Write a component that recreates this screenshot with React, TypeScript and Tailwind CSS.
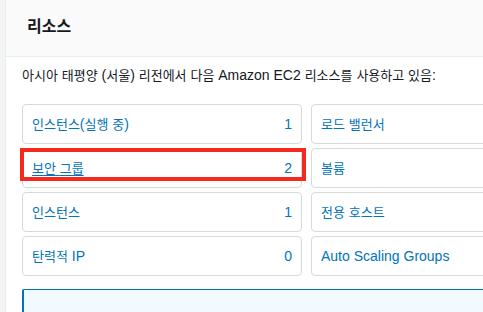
import React from "react";

const font = { fontFamily: '"Liberation Sans", "Noto Sans CJK KR", sans-serif' };

function K({ text, size = "sm" }: { text: string; size?: "sm" | "lg" }) {
  const parts = text.split(/([\uAC00-\uD7A3]+)/);
  return (
    <span>
      {parts.map((p, i) =>
        /[\uAC00-\uD7A3]/.test(p) ? (
          <span
            key={i}
            className={size === "lg" ? "text-[16px]" : "text-[13px]"}
            style={{ fontFamily: '"Noto Sans CJK KR", sans-serif' }}
          >
            {p}
          </span>
        ) : (
          <span key={i}>{p}</span>
        )
      )}
    </span>
  );
}

type Item = { label: string; count?: string; highlight?: boolean };

const left: Item[] = [
  { label: "인스턴스(실행 중)", count: "1" },
  { label: "보안 그룹", count: "2", highlight: true },
  { label: "인스턴스", count: "1" },
  { label: "탄력적 IP", count: "0" },
];
const right: Item[] = [
  { label: "로드 밸런서" },
  { label: "볼륨" },
  { label: "전용 호스트" },
  { label: "Auto Scaling Groups" },
];

function Card({ item }: { item: Item }) {
  return (
    <div className="relative h-[40px] rounded-[4px] border border-[#d5dbdb] bg-white flex items-center justify-between pl-[9px] pr-[9px] text-[14px] text-[#0073bb]">
      <span className={item.highlight ? "underline underline-offset-2" : ""}>
        <K text={item.label} />
      </span>
      {item.count && <span>{item.count}</span>}
      {item.highlight && (
        <div className="absolute -left-[3px] -top-[1px] w-[286px] h-[33px] border-[4px] border-[#f52a1f]" />
      )}
    </div>
  );
}

export default function App() {
  const rows = left.map((l, i) => [l, right[i]]);
  return (
    <div className="w-[483px] h-[312px] overflow-hidden bg-[#f2f3f3] pl-[5px]" style={font}>
      <div className="w-[700px] h-full bg-white border-l border-[#eaeded]">
        <div className="h-[57px] bg-[#fafafa] border-b border-[#eaeded] pl-[21px] flex items-center pb-[4px]">
          <span className="text-[18px] font-bold text-[#16191f]">
            <K text="리소스" size="lg" />
          </span>
        </div>
        <div className="pl-[16px]">
          <div className="h-[47px] flex items-center text-[14px] text-[#16191f] pb-[10px]">
            <K text="아시아 태평양 (서울) 리전에서 다음 Amazon EC2 리소스를 사용하고 있음:" />
          </div>
          <div className="grid grid-cols-[280px_280px] gap-x-[9px] gap-y-[4px]">
            {rows.map(([a, b], i) => (
              <React.Fragment key={i}>
                <Card item={a} />
                <Card item={b} />
              </React.Fragment>
            ))}
          </div>
          <div className="mt-[13px] h-[60px] w-[600px] bg-[#f1faff] border border-[#0073bb] border-l-2 rounded-tl-[2px]" />
        </div>
      </div>
    </div>
  );
}
